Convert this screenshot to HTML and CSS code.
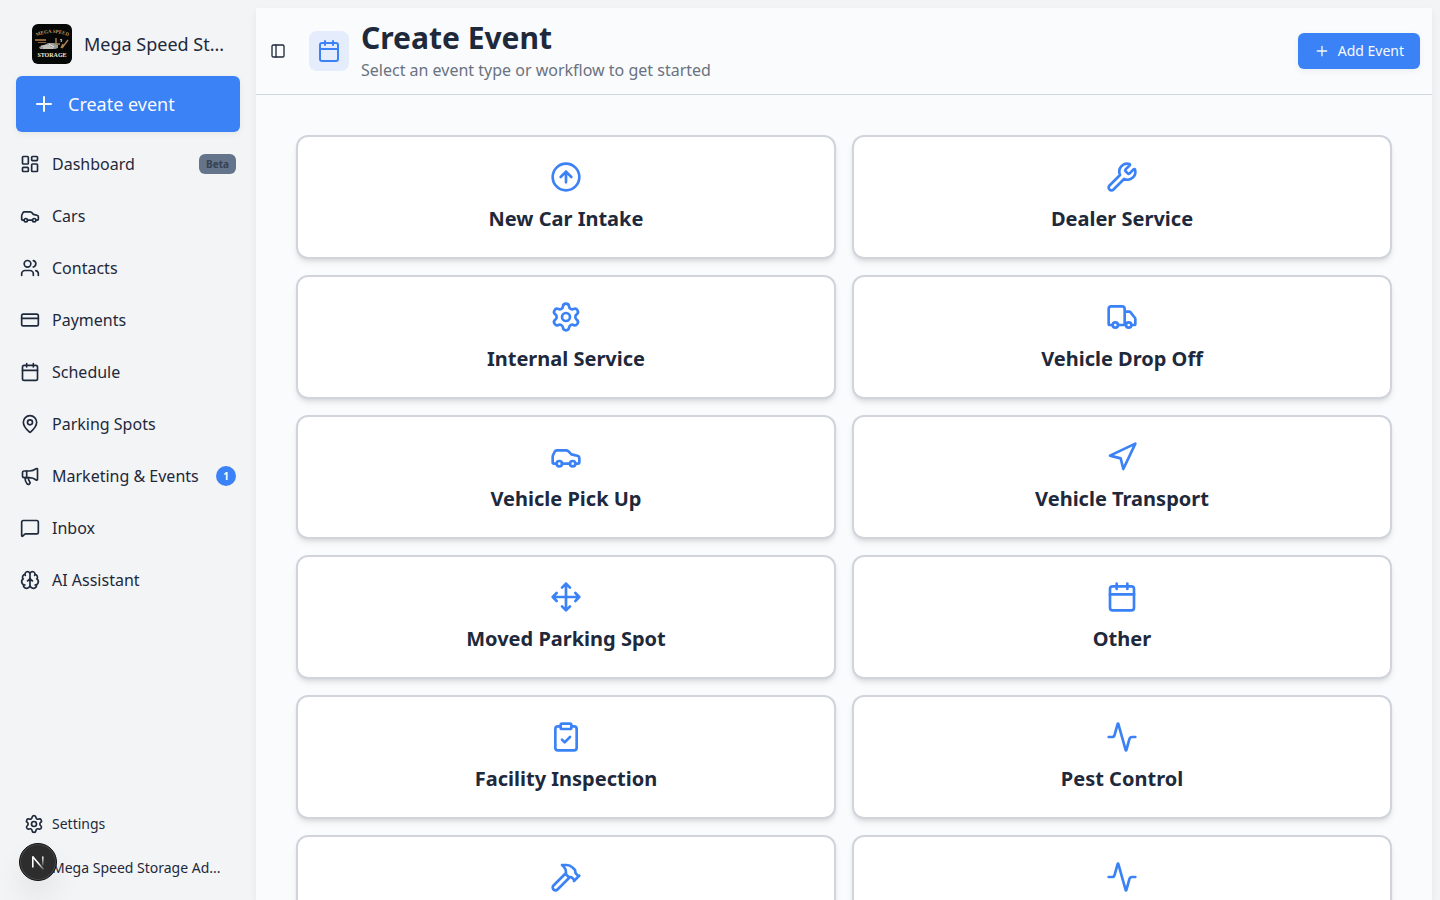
FILE: index.html
```html
<!DOCTYPE html>
<html lang="en">
<head>
<meta charset="utf-8">
<meta name="viewport" content="width=device-width, initial-scale=1">
<title>Create Event</title>
<link rel="stylesheet" href="styles.css">
</head>
<body>
<svg class="sprite" aria-hidden="true">
  <symbol id="plus" viewBox="0 0 24 24"><path d="M5 12h14M12 5v14"/></symbol>
  <symbol id="dashboard" viewBox="0 0 24 24"><rect width="7" height="9" x="3" y="3" rx="1"/><rect width="7" height="5" x="14" y="3" rx="1"/><rect width="7" height="9" x="14" y="12" rx="1"/><rect width="7" height="5" x="3" y="16" rx="1"/></symbol>
  <symbol id="car" viewBox="0 0 24 24"><path d="M19 17h2c.6 0 1-.4 1-1v-3c0-.9-.7-1.7-1.5-1.9C18.7 10.6 16 10 16 10s-1.3-1.4-2.2-2.3c-.5-.4-1.1-.7-1.8-.7H5c-.6 0-1.1.4-1.4.9l-1.4 2.9A3.7 3.7 0 0 0 2 12v4c0 .6.4 1 1 1h2"/><circle cx="7" cy="17" r="2"/><path d="M9 17h6"/><circle cx="17" cy="17" r="2"/></symbol>
  <symbol id="users" viewBox="0 0 24 24"><path d="M16 21v-2a4 4 0 0 0-4-4H6a4 4 0 0 0-4 4v2M16 3.128a4 4 0 0 1 0 7.744M22 21v-2a4 4 0 0 0-3-3.87"/><circle cx="9" cy="7" r="4"/></symbol>
  <symbol id="credit" viewBox="0 0 24 24"><rect width="20" height="14" x="2" y="5" rx="2"/><path d="M2 10h20"/></symbol>
  <symbol id="calendar" viewBox="0 0 24 24"><path d="M8 2v4M16 2v4"/><rect width="18" height="18" x="3" y="4" rx="2"/><path d="M3 10h18"/></symbol>
  <symbol id="pin" viewBox="0 0 24 24"><path d="M20 10c0 4.993-5.539 10.193-7.399 11.799a1 1 0 0 1-1.202 0C9.539 20.193 4 14.993 4 10a8 8 0 0 1 16 0"/><circle cx="12" cy="10" r="3"/></symbol>
  <symbol id="megaphone" viewBox="0 0 24 24"><path d="M11 6a13 13 0 0 0 8.4-2.8A1 1 0 0 1 21 4v12a1 1 0 0 1-1.6.8A13 13 0 0 0 11 14H5a2 2 0 0 1-2-2V8a2 2 0 0 1 2-2z"/><path d="M6 14a12 12 0 0 0 2.4 7.2 2 2 0 0 0 3.2-2.4A8 8 0 0 1 10 14M8 6v8"/></symbol>
  <symbol id="message" viewBox="0 0 24 24"><path d="M22 17a2 2 0 0 1-2 2H6.828a2 2 0 0 0-1.414.586l-2.202 2.202A.71.71 0 0 1 2 21.286V5a2 2 0 0 1 2-2h16a2 2 0 0 1 2 2z"/></symbol>
  <symbol id="brain" viewBox="0 0 24 24"><path d="M12 18V5M15 13a4.17 4.17 0 0 1-3-4 4.17 4.17 0 0 1-3 4M17.598 6.5A3 3 0 1 0 12 5a3 3 0 1 0-5.598 1.5M17.997 5.125a4 4 0 0 1 2.526 5.77M18 18a4 4 0 0 0 2-7.464M19.967 17.483A4 4 0 1 1 12 18a4 4 0 1 1-7.967-.517M6 18a4 4 0 0 1-2-7.464M6.003 5.125a4 4 0 0 0-2.526 5.77"/></symbol>
  <symbol id="gear" viewBox="0 0 24 24"><path d="M9.671 4.136a2.34 2.34 0 0 1 4.659 0 2.34 2.34 0 0 0 3.319 1.915 2.34 2.34 0 0 1 2.33 4.033 2.34 2.34 0 0 0 0 3.831 2.34 2.34 0 0 1-2.33 4.033 2.34 2.34 0 0 0-3.319 1.915 2.34 2.34 0 0 1-4.659 0 2.34 2.34 0 0 0-3.32-1.915 2.34 2.34 0 0 1-2.33-4.033 2.34 2.34 0 0 0 0-3.831A2.34 2.34 0 0 1 6.35 6.051a2.34 2.34 0 0 0 3.319-1.915"/><circle cx="12" cy="12" r="3"/></symbol>
  <symbol id="panel" viewBox="0 0 24 24"><rect width="18" height="18" x="3" y="3" rx="2"/><path d="M9 3v18"/></symbol>
  <symbol id="arrow-up" viewBox="0 0 24 24"><circle cx="12" cy="12" r="10"/><path d="m16 12-4-4-4 4M12 16V8"/></symbol>
  <symbol id="wrench" viewBox="0 0 24 24"><path d="M14.7 6.3a1 1 0 0 0 0 1.4l1.6 1.6a1 1 0 0 0 1.4 0l3.106-3.105c.32-.322.863-.22.983.218a6 6 0 0 1-8.259 7.057l-7.91 7.91a1 1 0 0 1-2.999-3l7.91-7.91a6 6 0 0 1 7.057-8.259c.438.12.54.662.219.984z"/></symbol>
  <symbol id="truck" viewBox="0 0 24 24"><path d="M14 18V6a2 2 0 0 0-2-2H4a2 2 0 0 0-2 2v11a1 1 0 0 0 1 1h2M15 18H9M19 18h2a1 1 0 0 0 1-1v-3.65a1 1 0 0 0-.22-.624l-3.48-4.35A1 1 0 0 0 17.52 8H14"/><circle cx="17" cy="18" r="2"/><circle cx="7" cy="18" r="2"/></symbol>
  <symbol id="navigation" viewBox="0 0 24 24"><path d="M3 11 22 2l-9 19-2-8z"/></symbol>
  <symbol id="move" viewBox="0 0 24 24"><path d="M12 2v20M15 19l-3 3-3-3M19 9l3 3-3 3M2 12h20M5 9l-3 3 3 3M9 5l3-3 3 3"/></symbol>
  <symbol id="clipboard" viewBox="0 0 24 24"><rect width="8" height="4" x="8" y="2" rx="1"/><path d="M16 4h2a2 2 0 0 1 2 2v14a2 2 0 0 1-2 2H6a2 2 0 0 1-2-2V6a2 2 0 0 1 2-2h2M9 14l2 2 4-4"/></symbol>
  <symbol id="activity" viewBox="0 0 24 24"><path d="M22 12h-2.48a2 2 0 0 0-1.93 1.46l-2.35 8.36a.25.25 0 0 1-.48 0L9.24 2.18a.25.25 0 0 0-.48 0l-2.35 8.36A2 2 0 0 1 4.49 12H2"/></symbol>
  <symbol id="hammer" viewBox="0 0 24 24"><path d="m15 12-9.373 9.373a1 1 0 0 1-3.001-3L12 9M18 15l4-4M21.5 11.5l-1.914-1.914A2 2 0 0 1 19 8.172v-.344a2 2 0 0 0-.586-1.414l-1.657-1.657A6 6 0 0 0 12.516 3H9l1.243 1.243A6 6 0 0 1 12 8.485V10l2 2h1.172a2 2 0 0 1 1.414.586L18.5 14.5"/></symbol>
</svg>

<div class="app">
  <aside class="sidebar">
    <div class="brand">
      <svg class="brand-logo" viewBox="0 0 40 40" aria-hidden="true">
        <defs><path id="arc" d="M3 13Q20 5 38 13"/></defs>
        <rect width="40" height="40" fill="#060707"/>
        <text class="logo-arc" text-anchor="middle"><textPath href="#arc" startOffset="50%">MEGA SPEED</textPath></text>
        <path d="M3 15h11v2H3zM6 18h8v1H6z" fill="#8b633c"/>
        <path d="M7 23l5-2 4-2h6l4 2v3l-3 1H8z" fill="#9b9c97"/>
        <path d="M9 22h9M17 20l5 3M11 24h10" stroke="#e6e5df" stroke-width="1"/>
        <path d="M24 14v6M23 20h5M36 16l-6 8M31 20l-2 4" stroke="#ab8350" stroke-width="1.4"/>
        <path d="M28 16q3-2 1 2" fill="none" stroke="#ded9c9"/>
        <text class="logo-base" x="20" y="33" text-anchor="middle">STORAGE</text>
      </svg>
      <span class="brand-name">Mega Speed St...</span>
    </div>
    <button class="create" type="button"><svg class="icon icon-24"><use href="#plus"/></svg>Create event</button>
    <nav class="nav">
      <a href="#"><svg class="icon"><use href="#dashboard"/></svg><span>Dashboard</span><span class="beta">Beta</span></a>
      <a href="#"><svg class="icon"><use href="#car"/></svg><span>Cars</span></a>
      <a href="#"><svg class="icon"><use href="#users"/></svg><span>Contacts</span></a>
      <a href="#"><svg class="icon"><use href="#credit"/></svg><span>Payments</span></a>
      <a href="#"><svg class="icon"><use href="#calendar"/></svg><span>Schedule</span></a>
      <a href="#"><svg class="icon"><use href="#pin"/></svg><span>Parking Spots</span></a>
      <a href="#"><svg class="icon"><use href="#megaphone"/></svg><span>Marketing &amp; Events</span><span class="count">1</span></a>
      <a href="#"><svg class="icon"><use href="#message"/></svg><span>Inbox</span></a>
      <a href="#"><svg class="icon"><use href="#brain"/></svg><span>AI Assistant</span></a>
    </nav>
    <div class="footer">
      <a href="#"><svg class="icon"><use href="#gear"/></svg><span>Settings</span></a>
      <button class="account" type="button"><span>Mega Speed Storage Ad...</span></button>
    </div>
  </aside>

  <main class="main">
    <header class="header">
      <button class="toggle" type="button" aria-label="Toggle sidebar"><svg class="icon icon-16"><use href="#panel"/></svg></button>
      <div class="header-icon"><svg class="icon icon-24"><use href="#calendar"/></svg></div>
      <div class="titles">
        <h1>Create Event</h1>
        <p>Select an event type or workflow to get started</p>
      </div>
      <button class="add" type="button"><svg class="icon icon-16"><use href="#plus"/></svg>Add Event</button>
    </header>
    <div class="grid">
      <button class="card" type="button"><svg class="icon icon-32"><use href="#arrow-up"/></svg><span>New Car Intake</span></button>
      <button class="card" type="button"><svg class="icon icon-32"><use href="#wrench"/></svg><span>Dealer Service</span></button>
      <button class="card" type="button"><svg class="icon icon-32"><use href="#gear"/></svg><span>Internal Service</span></button>
      <button class="card" type="button"><svg class="icon icon-32"><use href="#truck"/></svg><span>Vehicle Drop Off</span></button>
      <button class="card" type="button"><svg class="icon icon-32"><use href="#car"/></svg><span>Vehicle Pick Up</span></button>
      <button class="card" type="button"><svg class="icon icon-32"><use href="#navigation"/></svg><span>Vehicle Transport</span></button>
      <button class="card" type="button"><svg class="icon icon-32"><use href="#move"/></svg><span>Moved Parking Spot</span></button>
      <button class="card" type="button"><svg class="icon icon-32"><use href="#calendar"/></svg><span>Other</span></button>
      <button class="card" type="button"><svg class="icon icon-32"><use href="#clipboard"/></svg><span>Facility Inspection</span></button>
      <button class="card" type="button"><svg class="icon icon-32"><use href="#activity"/></svg><span>Pest Control</span></button>
      <button class="card" type="button"><svg class="icon icon-32"><use href="#hammer"/></svg></button>
      <button class="card" type="button"><svg class="icon icon-32"><use href="#activity"/></svg></button>
    </div>
  </main>
</div>

<button class="dev" type="button" aria-label="Developer tools">
  <svg viewBox="0 0 36 36" aria-hidden="true">
    <defs>
      <linearGradient id="fade-d" gradientUnits="userSpaceOnUse" x1="19" y1="19" x2="24" y2="25"><stop stop-color="#fff"/><stop offset="1" stop-color="#fff" stop-opacity="0.2"/></linearGradient>
      <linearGradient id="fade-v" gradientUnits="userSpaceOnUse" x1="23" y1="12" x2="23" y2="22"><stop stop-color="#fff"/><stop offset="1" stop-color="#fff" stop-opacity="0.1"/></linearGradient>
    </defs>
    <g fill="none" stroke-width="1.6"><path d="M12.8 23.5V12.5" stroke="#fff"/><path d="M12.6 12.5 23.6 25.5" stroke="url(#fade-d)"/><path d="M22.8 12.4v9" stroke="url(#fade-v)"/></g>
  </svg>
</button>
</body>
</html>
```
FILE: styles.css
```css
* { box-sizing: border-box; }

body {
  margin: 0;
  background: #f3f4f6;
  color: #1e293b;
  font: 16px/24px "Noto Sans", sans-serif;
}

h1, p { margin: 0; }
a { color: inherit; text-decoration: none; }
button { margin: 0; padding: 0; border: 0; background: none; color: inherit; font: inherit; cursor: pointer; }

.sprite { position: absolute; width: 0; height: 0; }
.icon { flex: none; width: 20px; height: 20px; fill: none; stroke: currentColor; stroke-width: 2; stroke-linecap: round; stroke-linejoin: round; }
.icon-16 { width: 16px; height: 16px; }
.icon-24 { width: 24px; height: 24px; }
.icon-32 { width: 32px; height: 32px; }

.app { display: flex; height: 100vh; overflow: hidden; }

.sidebar { display: flex; flex: none; flex-direction: column; width: 256px; padding: 16px 16px 8px; }
.brand { display: flex; align-items: center; gap: 12px; padding: 8px 12px 12px 16px; }
.brand-logo { flex: none; width: 40px; height: 40px; border-radius: 6px; }
.logo-arc { fill: #c4965c; font: bold 5px "Liberation Serif", serif; }
.logo-base { fill: #f0ebdd; font: bold 6px "Liberation Serif", serif; }
.brand-name, .account span { white-space: nowrap; }
.brand-name { font-size: 18px; line-height: 28px; }

.create {
  display: flex;
  align-items: center;
  gap: 12px;
  height: 56px;
  padding: 0 16px;
  border-radius: 6px;
  background: #3b82f6;
  box-shadow: 0 2px 6px rgba(0, 0, 0, 0.06);
  color: #f8fafc;
  font-size: 18px;
}

.nav { display: flex; flex-direction: column; gap: 8px; padding-top: 10px; }
.nav a { display: flex; align-items: center; gap: 12px; height: 44px; padding: 0 4px; white-space: nowrap; }
.beta, .count { margin-left: auto; font-size: 10px; font-weight: 700; line-height: 20px; text-align: center; }
.beta { padding: 0 7px; border-radius: 6px; background: #64748b; color: #374151; }
.count { width: 20px; border-radius: 10px; background: #3b82f6; color: #fff; }

.footer { display: flex; flex-direction: column; gap: 4px; margin-top: auto; font-size: 14px; }
.footer a { display: flex; align-items: center; gap: 8px; height: 32px; padding-left: 8px; }
.account { display: flex; align-items: center; height: 48px; padding-left: 36px; }

.main {
  display: flex;
  flex: 1;
  flex-direction: column;
  min-width: 0;
  margin: 8px 8px 0 0;
  background: #f9fbfd;
  box-shadow: 0 4px 8px rgba(0, 0, 0, 0.06);
}

.header { display: flex; flex: none; align-items: center; padding: 12px 12px 12px 8px; border-bottom: 1px solid #cfd6dc; }
.toggle { display: grid; place-items: center; width: 28px; height: 28px; margin-right: 17px; }
.header-icon { display: grid; place-items: center; width: 40px; height: 40px; margin-right: 12px; border-radius: 8px; background: #e5edfc; color: #3b82f6; }
.titles { display: flex; flex: 1; flex-direction: column; gap: 2px; min-width: 0; }
.titles h1 { font-size: 30px; font-weight: 700; line-height: 36px; }
.titles p { color: #6b7280; }
.add {
  display: flex;
  align-items: center;
  gap: 8px;
  height: 36px;
  padding: 0 16px;
  border-radius: 6px;
  background: #3b82f6;
  box-shadow: 0 2px 6px rgba(0, 0, 0, 0.06);
  color: #f8fafc;
  font-size: 14px;
}

.grid { display: grid; flex: 1; grid-template-columns: repeat(2, 1fr); grid-auto-rows: max-content; gap: 16px; min-height: 0; padding: 40px; overflow: hidden; }
.card {
  display: flex;
  flex-direction: column;
  align-items: center;
  gap: 12px;
  min-height: 124px;
  padding: 24px;
  border: 2px solid #d1d5db;
  border-radius: 12px;
  background: #fff;
  box-shadow: 0 4px 6px -1px rgba(0, 0, 0, 0.1), 0 2px 4px -2px rgba(0, 0, 0, 0.1);
  font-size: 20px;
  font-weight: 700;
  line-height: 28px;
}
.card .icon { color: #3b82f6; }

.dev {
  position: fixed;
  bottom: 19px;
  left: 19px;
  width: 38px;
  height: 38px;
  border: 1px solid #111;
  border-radius: 50%;
  background: #2d2d2d;
  box-shadow: inset 0 0 0 1px #4a4a4a, 0 16px 32px -8px rgba(0, 0, 0, 0.2);
}
.dev svg { display: block; width: 36px; height: 36px; }
```
